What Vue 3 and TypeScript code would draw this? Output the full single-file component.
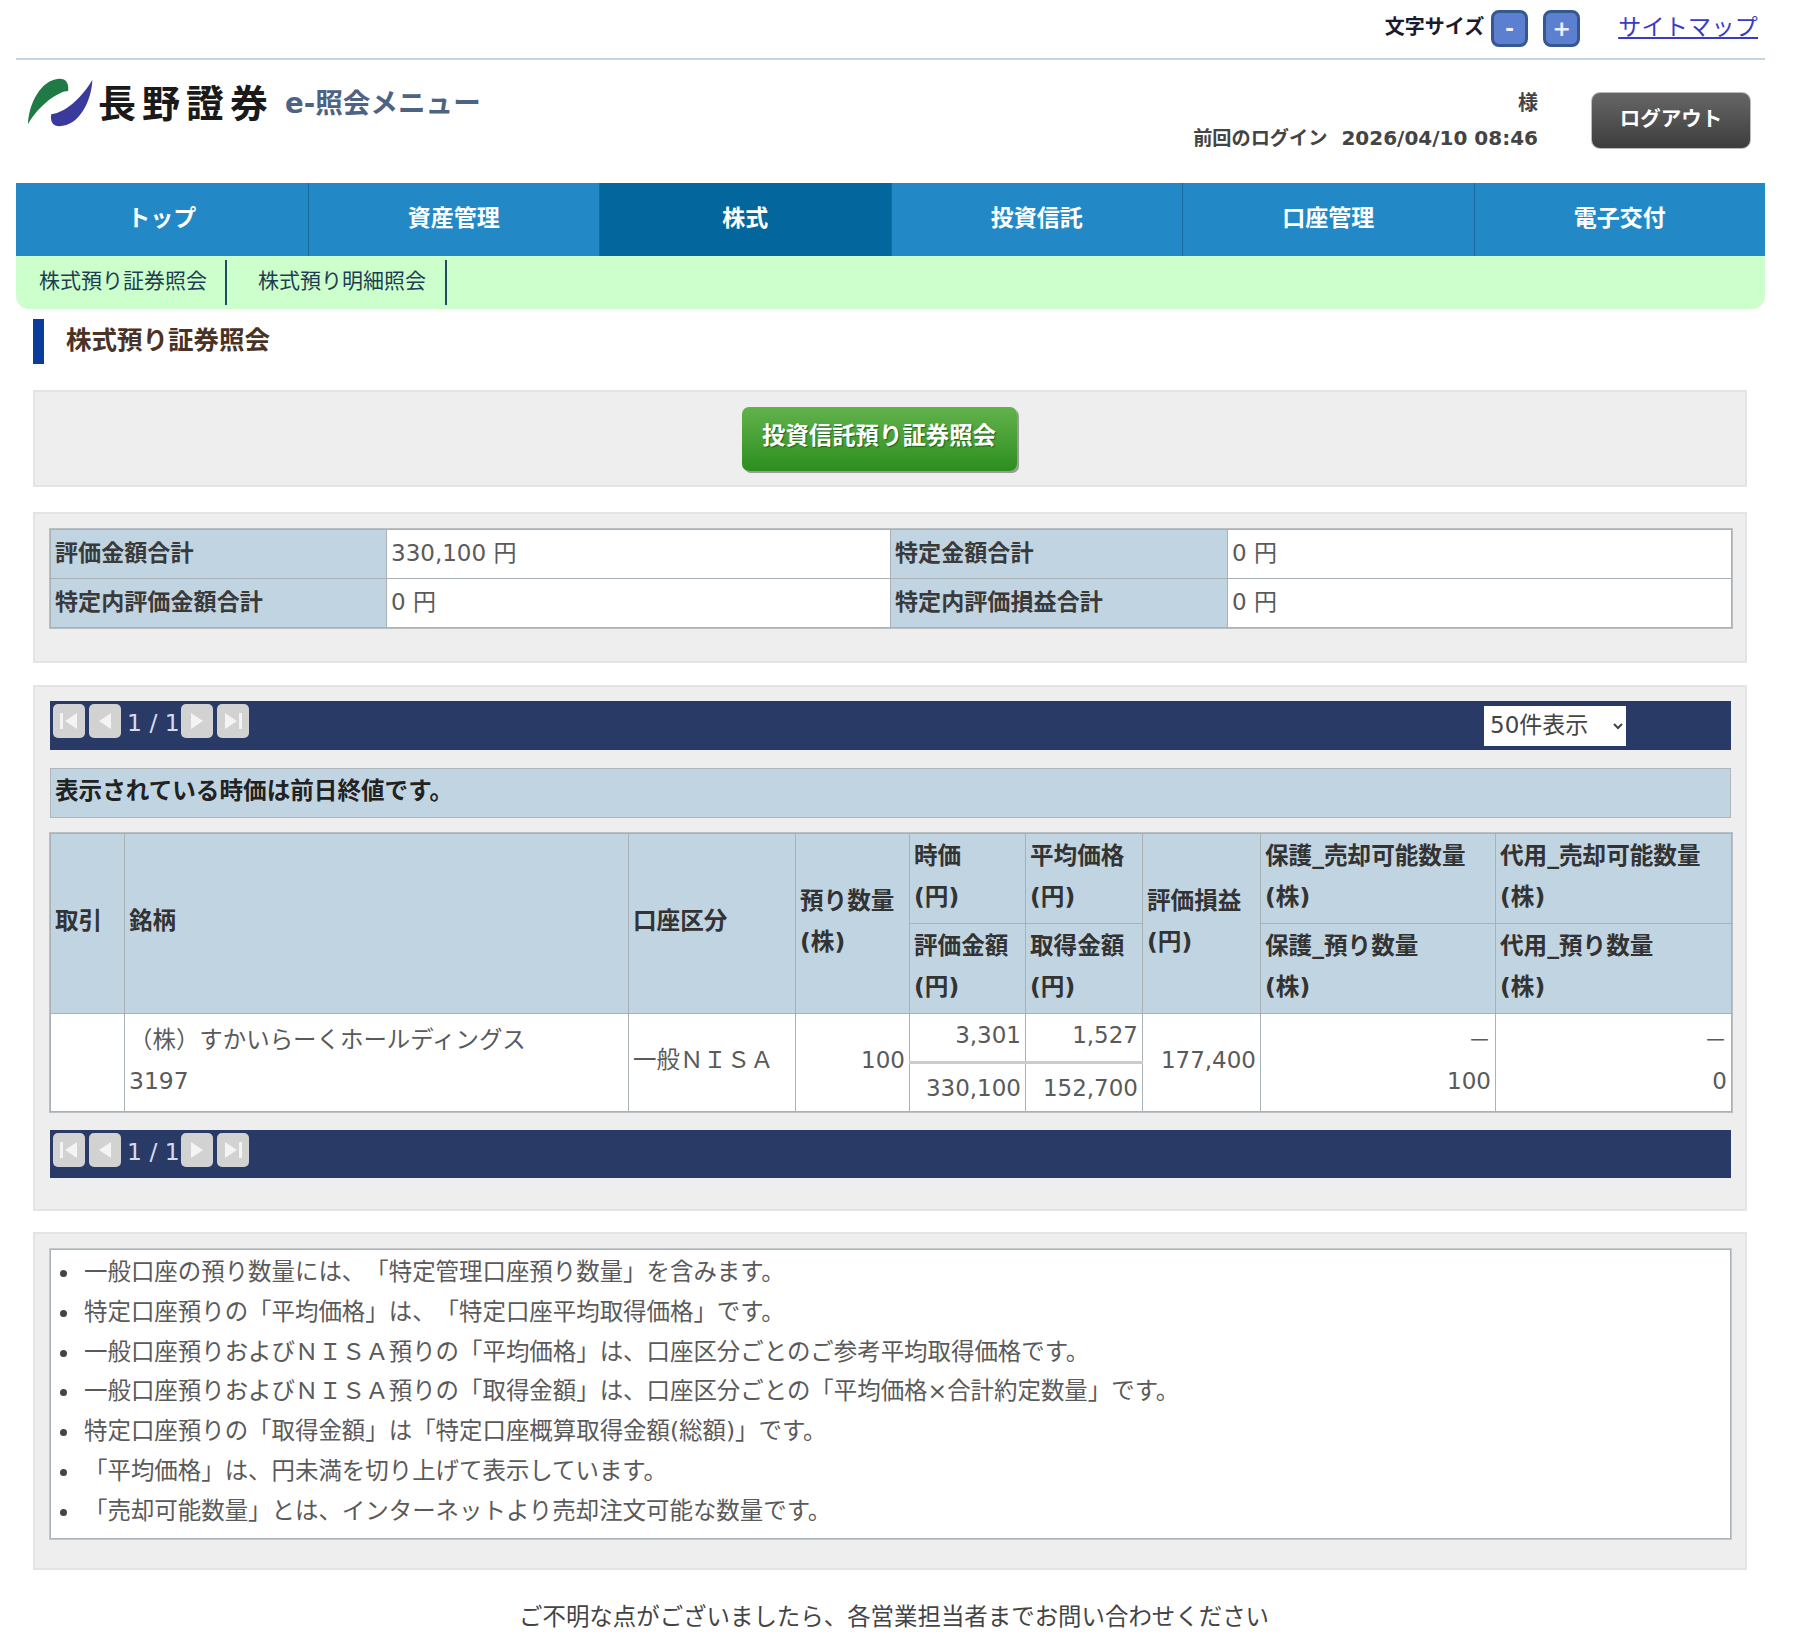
<script setup lang="ts">
const tabs: string[] = ['トップ', '資産管理', '株式', '投資信託', '口座管理', '電子交付']
const subs: string[] = ['株式預り証券照会', '株式預り明細照会']
const notes: string[] = [
  '一般口座の預り数量には、「特定管理口座預り数量」を含みます。',
  '特定口座預りの「平均価格」は、「特定口座平均取得価格」です。',
  '一般口座預りおよびＮＩＳＡ預りの「平均価格」は、口座区分ごとのご参考平均取得価格です。',
  '一般口座預りおよびＮＩＳＡ預りの「取得金額」は、口座区分ごとの「平均価格×合計約定数量」です。',
  '特定口座預りの「取得金額」は「特定口座概算取得金額(総額)」です。',
  '「平均価格」は、円未満を切り上げて表示しています。',
  '「売却可能数量」とは、インターネットより売却注文可能な数量です。',
]
</script>

<template>
  <div class="page">
    <div class="top">
      <span class="size-label">文字サイズ</span>
      <button class="size-btn minus">-</button>
      <button class="size-btn plus">+</button>
      <a class="sitemap" href="#">サイトマップ</a>
    </div>

    <header class="head">
      <div class="brand">
        <svg class="mark" viewBox="80 50 205 150" width="68" height="50">
          <path fill="#1f7a45" d="M86 192C88 130 125 58 180 55C200 54 210 68 207 92C180 92 120 132 86 192Z" />
          <path fill="#3a3a9c" d="M280 58C278 120 242 197 180 198C163 198 152 186 156 162C195 158 245 118 280 58Z" />
        </svg>
        <span class="company">長野證券</span>
        <span class="menu-name">e-照会メニュー</span>
      </div>
      <div class="user">
        <div class="user-name">様</div>
        <div class="last-login"><span class="login-label">前回のログイン</span><span class="stamp">2026/04/10 08:46</span></div>
      </div>
      <button class="logout">ログアウト</button>
    </header>

    <nav class="tabs">
      <a v-for="(t, i) in tabs" :key="t" class="tab" :class="{ active: i === 2 }">{{ t }}</a>
    </nav>
    <div class="subnav">
      <a v-for="s in subs" :key="s" class="sub">{{ s }}</a>
    </div>

    <h1 class="title">株式預り証券照会</h1>

    <section class="box box-action">
      <button class="green">投資信託預り証券照会</button>
    </section>

    <section class="box box-summary">
      <table class="summary">
        <colgroup><col class="c1" /><col class="c2" /><col class="c3" /><col class="c4" /></colgroup>
        <tbody>
          <tr><th>評価金額合計</th><td>330,100 円</td><th>特定金額合計</th><td>0 円</td></tr>
          <tr><th>特定内評価金額合計</th><td>0 円</td><th>特定内評価損益合計</th><td>0 円</td></tr>
        </tbody>
      </table>
    </section>

    <section class="box box-list">
      <div class="pager">
        <button class="pg"><svg viewBox="0 0 32 34" width="32" height="34"><path d="M7 9h3v16H7zM24 9v16L12 17z" /></svg></button>
        <button class="pg"><svg viewBox="0 0 32 34" width="32" height="34"><path d="M22 9v16L10 17z" /></svg></button>
        <span class="count">1 / 1</span>
        <button class="pg"><svg viewBox="0 0 32 34" width="32" height="34"><path d="M10 9v16l12-8z" /></svg></button>
        <button class="pg"><svg viewBox="0 0 32 34" width="32" height="34"><path d="M8 9v16l12-8zM22 9h3v16h-3z" /></svg></button>
        <select class="per-page"><option>50件表示</option></select>
      </div>

      <div class="notice">表示されている時価は前日終値です。</div>

      <table class="holdings">
        <colgroup>
          <col style="width:74px" /><col style="width:504px" /><col style="width:167px" />
          <col style="width:114px" /><col style="width:116px" /><col style="width:117px" />
          <col style="width:118px" /><col style="width:235px" /><col style="width:236px" />
        </colgroup>
        <thead>
          <tr>
            <th rowspan="2">取引</th>
            <th rowspan="2">銘柄</th>
            <th rowspan="2">口座区分</th>
            <th rowspan="2">預り数量<br />(株)</th>
            <th>時価<br />(円)</th>
            <th>平均価格<br />(円)</th>
            <th rowspan="2">評価損益<br />(円)</th>
            <th>保護_売却可能数量<br />(株)</th>
            <th>代用_売却可能数量<br />(株)</th>
          </tr>
          <tr>
            <th>評価金額<br />(円)</th>
            <th>取得金額<br />(円)</th>
            <th>保護_預り数量<br />(株)</th>
            <th>代用_預り数量<br />(株)</th>
          </tr>
        </thead>
        <tbody>
          <tr>
            <td rowspan="2"></td>
            <td rowspan="2">（株）すかいらーくホールディングス<br />3197</td>
            <td rowspan="2">一般ＮＩＳＡ</td>
            <td rowspan="2" class="num">100</td>
            <td class="num split-top">3,301</td>
            <td class="num split-top">1,527</td>
            <td rowspan="2" class="num">177,400</td>
            <td rowspan="2" class="num">－<br />100</td>
            <td rowspan="2" class="num">－<br />0</td>
          </tr>
          <tr>
            <td class="num split-bottom">330,100</td>
            <td class="num split-bottom">152,700</td>
          </tr>
        </tbody>
      </table>

      <div class="pager pager-bottom">
        <button class="pg"><svg viewBox="0 0 32 34" width="32" height="34"><path d="M7 9h3v16H7zM24 9v16L12 17z" /></svg></button>
        <button class="pg"><svg viewBox="0 0 32 34" width="32" height="34"><path d="M22 9v16L10 17z" /></svg></button>
        <span class="count">1 / 1</span>
        <button class="pg"><svg viewBox="0 0 32 34" width="32" height="34"><path d="M10 9v16l12-8z" /></svg></button>
        <button class="pg"><svg viewBox="0 0 32 34" width="32" height="34"><path d="M8 9v16l12-8zM22 9h3v16h-3z" /></svg></button>
      </div>
    </section>

    <section class="box box-notes">
      <ul class="notes">
        <li v-for="n in notes" :key="n" class="note">{{ n }}</li>
      </ul>
    </section>

    <p class="contact">ご不明な点がございましたら、各営業担当者までお問い合わせください</p>
  </div>
</template>

<style>
html, body { margin: 0; background: #fff; }
</style>

<style scoped>
.page {
  box-sizing: border-box;
  width: 1800px;
  height: 1638px;
  overflow: hidden;
  padding: 0 35px 0 16px;
  font-family: "DejaVu Sans", "Noto Sans CJK JP", sans-serif;
  font-size: 23.45px;
  color: #5a5a5a;
  text-spacing-trim: space-all;
}
.top {
  box-sizing: border-box;
  height: 60px;
  border-bottom: 2px solid #c3d6e1;
  display: flex;
  align-items: flex-start;
  padding: 10px 7px 0 0;
}
.size-label { margin-left: auto; margin-right: 7px; margin-top: 2px; font-size: 20px; line-height: 30px; font-weight: 700; color: #1a1a2e; }
.size-btn {
  box-sizing: border-box;
  width: 37px; height: 37px; padding: 0;
  border: 3px solid #34588f; border-radius: 8px;
  background: #5c7fcf; color: #eef; font: 700 22px/28px "DejaVu Sans", sans-serif;
}
.plus { margin-left: 15px; }
.sitemap { margin-left: 38px; margin-top: 3px; font-size: 23px; line-height: 28px; letter-spacing: .3px; color: #3a3ac8; }
.head { height: 123px; display: flex; align-items: flex-start; }
.brand { display: flex; align-items: center; margin: 17px 0 0 10px; height: 50px; }
.company { margin-left: 4px; margin-top: 4px; font-size: 38px; letter-spacing: 6px; font-weight: 700; color: #1a1a1a; line-height: 50px; white-space: nowrap; }
.menu-name { margin-left: 11px; margin-top: 4px; font-size: 27.6px; font-weight: 700; color: #4d6384; white-space: nowrap; line-height: 54px; }
.user { margin: 26px 0 0 auto; font-size: 20px; line-height: 35px; text-align: right; font-weight: 700; color: #444; }
.last-login { display: flex; gap: 14px; }
.login-label { font-size: 19.2px; }
.logout {
  width: 160px; height: 57px; margin: 32px 14px 0 53px; padding: 0 0 6px;
  border: 1px solid #bbb; border-radius: 9px;
  background: linear-gradient(#666, #3d3d3d);
  color: #fff; font: 700 20.5px/1 "Noto Sans CJK JP", sans-serif;
}
.tabs { display: grid; grid-template-columns: repeat(6, 1fr); height: 73px; }
.tab {
  display: flex; align-items: center; justify-content: center;
  background: #2389c6; color: #fff; font-weight: 700; font-size: 23px;
  border-left: 1px solid #1a6aa0; padding-bottom: 7px; box-sizing: border-box;
}
.tab:first-child { border-left: 0; }
.tab.active { background: #03669c; }
.subnav {
  height: 53px; background: #ccffcc; border-radius: 0 0 13px 13px;
  display: flex; padding-top: 4px; box-sizing: border-box;
}
.sub {
  height: 45px; line-height: 43px; font-size: 21px; color: #1f3d52;
  padding: 0 19px 0 23px; border-right: 2px solid #1f4d66; margin-left: -1px;
}
.sub:first-child { margin-left: 0; padding-right: 18px; }
.sub + .sub { margin-left: 8px; }
.title {
  margin: 10px 0 0 17px; height: 45px; padding-left: 22px;
  border-left: 11px solid #0a3c9c;
  font-size: 25.5px; line-height: 43px; font-weight: 700; color: #4a3325;
}
.box {
  box-sizing: border-box;
  margin: 0 18px 0 17px; padding: 15px;
  background: #eee; border: 2px solid #e4e4e4;
}
.box-action { margin-top: 26px; height: 97px; display: flex; justify-content: center; padding: 15px 0 0; }
.green {
  width: 275px; height: 64px; margin-left: -22px; padding: 0 0 8px;
  border: 0; border-radius: 7px;
  background: linear-gradient(#62b24c, #2d8e1f);
  box-shadow: 2px 2px 0 #9a9a9a;
  color: #fff; font: 700 23.4px/1 "Noto Sans CJK JP", sans-serif;
  text-shadow: 1px 1px 1px #1f5f15;
}
.box-summary { margin-top: 25px; height: 151px; }
.summary, .holdings { border-collapse: collapse; table-layout: fixed; width: 1681px; background: #fff; }
.summary { box-shadow: 0 0 0 1px #b9bfc3; }
.c1 { width: 336px; } .c2 { width: 504px; } .c3 { width: 337px; } .c4 { width: 504px; }
.summary th, .summary td { height: 42px; padding: 0 5px 6px 4px; border: 1px solid #a9b1b6; text-align: left; font-size: 23px; }
.summary th { background: #c1d4e1; color: #3a3a3a; font-weight: 700; white-space: nowrap; font-size: 23.1px; }
.box-list { margin-top: 22px; height: 526px; padding-top: 14px; }
.pager {
  height: 49px; width: 1681px; background: #2a3a67;
  display: flex; align-items: flex-start; padding: 3px 0 0 3px; box-sizing: border-box;
}
.pager-bottom { margin-top: 18px; height: 48px; }
.pg {
  width: 32px; height: 34px; padding: 0; border: 0; border-radius: 5px;
  background: #d2d2d2; margin-right: 4px; display: block;
}
.pg svg { display: block; fill: #f4f4f4; }
.count { color: #d5dcec; font-size: 23.5px; line-height: 38px; margin: 0 1px 0 2px; white-space: nowrap; }
.per-page {
  width: 142px; height: 40px; margin: 2px 105px 0 auto; padding: 0 0 3px 2px;
  border: 0; border-radius: 0; background: #fff; color: #444;
  font-family: "DejaVu Sans", "Noto Sans CJK JP", sans-serif; font-size: 23px;
}
.notice {
  box-sizing: border-box;
  width: 1681px; height: 50px; margin-top: 18px; padding-left: 4px;
  background: #c1d4e1; border: 1px solid #aeb6bb;
  line-height: 44px; font-size: 23.6px; font-weight: 700; color: #222;
}
.holdings { margin-top: 15px; line-height: 41px; box-shadow: 0 0 0 1px #b9bfc3; }
.holdings th, .holdings td { padding: 0 5px 4px 4px; border: 1px solid #a9b1b6; text-align: left; vertical-align: middle; }
.holdings th { height: 85px; background: #c1d4e1; color: #333; font-weight: 700; white-space: nowrap; font-size: 23.6px; }
.holdings td { height: 47px; white-space: nowrap; overflow: visible; }
.holdings .num { text-align: right; padding: 0 4px 4px; font-size: 23px; }
.holdings .split-top { border-bottom: 3px solid #ccc; vertical-align: top; line-height: 43px; padding-bottom: 0; }
.holdings .split-bottom { border-top: 3px solid #ccc; line-height: 40px; padding-bottom: 0; height: 47px; }
.box-notes { margin-top: 21px; height: 338px; }
.notes {
  box-sizing: border-box; margin: 0; width: 1681px; height: 290px;
  padding: 3px 0 0 33px; background: #fff;
  border: 1px solid #a9b1b6; box-shadow: 0 0 0 1px #c4c9cc;
  line-height: 39.8px; list-style: none;
}
.note { position: relative; height: 39.8px; }
.note::before {
  content: ""; position: absolute; left: -24px; top: 17px;
  width: 7px; height: 7px; border-radius: 50%; background: #444;
}
.contact { margin: 27px 0 0; padding-left: 7px; text-align: center; line-height: 40px; color: #444; white-space: nowrap; }
</style>
